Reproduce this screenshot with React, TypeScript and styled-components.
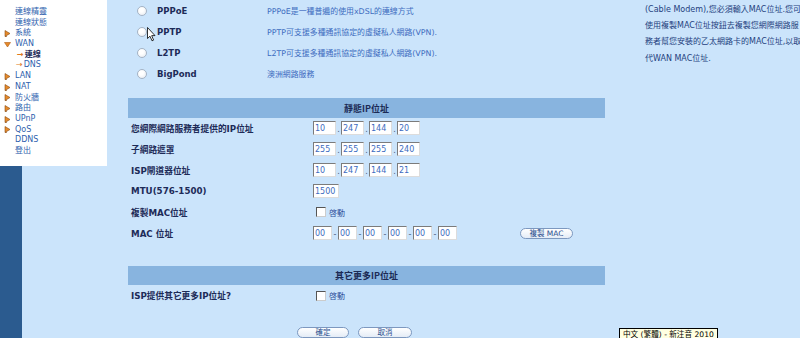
import React from 'react'
import styled, { createGlobalStyle } from 'styled-components'

const GlobalStyle = createGlobalStyle`
  html, body {
    margin: 0;
    padding: 0;
    background: #cbe4fb;
  }
  body {
    font-family: 'DejaVu Sans', 'Noto Sans CJK TC', sans-serif;
  }
`

const Page = styled.div`
  width: 800px;
  height: 338px;
  display: flex;
  overflow: hidden;
  position: relative;
  background: #cbe4fb;
`

const Sidebar = styled.div`
  width: 128px;
  flex-shrink: 0;
  background: linear-gradient(to right, #2b5b8f 0, #2b5b8f 22px, #cbe4fb 22px);
`

const Menu = styled.div`
  width: 107px;
  height: 166px;
  box-sizing: border-box;
  padding-top: 7px;
  background: #ffffff;
`

const MenuItem = styled.div<{ $indent?: number; $active?: boolean }>`
  height: 10.7px;
  line-height: 10.7px;
  display: flex;
  align-items: center;
  padding-left: ${(p) => p.$indent ?? 15}px;
  font-size: 8px;
  color: ${(p) => (p.$active ? '#1b2a55' : '#2f5fae')};
  font-weight: ${(p) => (p.$active ? 'bold' : 'normal')};
  white-space: nowrap;
`

const Bullet = styled.svg`
  width: 7px;
  height: 7px;
  margin-right: 4px;
  flex-shrink: 0;
`

const SubArrow = styled.span`
  color: #e07a20;
  font-size: 8px;
  margin-right: 1px;
`

const Main = styled.div`
  width: 477px;
  flex-shrink: 0;
  display: flex;
  flex-direction: column;
`

const RadioRow = styled.div`
  height: 21.3px;
  display: flex;
  align-items: center;
  padding-left: 9px;
`

const Radio = styled.span`
  width: 8px;
  height: 8px;
  border-radius: 50%;
  border: 1px solid #a5b3c4;
  background: radial-gradient(circle at 40% 35%, #ffffff 30%, #e3e8ee 100%);
  flex-shrink: 0;
`

const RadioLabel = styled.span`
  width: 110px;
  margin-left: 10px;
  font-size: 8.5px;
  font-weight: bold;
  color: #1d2b58;
`

const Desc = styled.span`
  font-size: 7.9px;
  color: #3d6cc0;
  white-space: nowrap;
`

const SectionBar = styled.div<{ $top: number }>`
  margin-top: ${(p) => p.$top}px;
  height: 19.5px;
  background: #88b4df;
  display: flex;
  align-items: center;
  justify-content: center;
  font-size: 9px;
  font-weight: bold;
  color: #1b2a55;
  font-family: 'Noto Sans CJK TC', 'DejaVu Serif', serif;
`

const FormRow = styled.div`
  height: 21.2px;
  display: grid;
  grid-template-columns: 185px 1fr;
  align-items: center;
`

const Label = styled.div`
  padding-left: 3px;
  font-size: 8.7px;
  font-weight: bold;
  color: #1d2b58;
  white-space: nowrap;
`

const Field = styled.div`
  display: flex;
  align-items: center;
`

const TextBox = styled.input<{ $w: number }>`
  width: ${(p) => p.$w}px;
  height: 14px;
  box-sizing: border-box;
  margin: 0;
  padding: 0 1px;
  border: 1px solid;
  border-color: #7b7b7b #dcdcdc #dcdcdc #7b7b7b;
  background: #ffffff;
  font-family: 'DejaVu Sans', sans-serif;
  font-size: 8px;
  color: #3d6cc0;
  outline: none;
`

const Sep = styled.span<{ $w: number }>`
  width: ${(p) => p.$w}px;
  text-align: center;
  font-size: 8px;
  line-height: 14px;
  color: #4a5a7a;
  padding-top: 3px;
`

const Check = styled.span`
  width: 8px;
  height: 8px;
  margin-left: 3px;
  border: 1px solid;
  border-color: #555 #ccc #ccc #555;
  background: #ffffff;
`

const CheckText = styled.span`
  margin-left: 3px;
  font-size: 8px;
  color: #2d4f9a;
`

const PillButton = styled.button<{ $w: number }>`
  width: ${(p) => p.$w}px;
  height: 11px;
  padding: 0;
  border: 1px solid #7d98bf;
  border-radius: 6px;
  background: linear-gradient(#ffffff, #e4ecf6);
  font-family: 'DejaVu Sans', 'Noto Sans CJK TC', sans-serif;
  font-size: 7.5px;
  line-height: 9px;
  color: #2a4f8f;
`

const CopyButton = styled(PillButton)`
  margin-left: 63px;
`

const Actions = styled.div`
  margin-top: 21px;
  padding-left: 169px;
  display: flex;
  gap: 9px;
`

const Note = styled.div`
  margin-left: 40px;
  padding-top: 2px;
  width: 175px;
  flex-shrink: 0;
  display: flex;
  flex-direction: column;
`

const NoteLine = styled.div`
  height: 16.2px;
  line-height: 16.2px;
  font-size: 8px;
  color: #243f7e;
  white-space: nowrap;
`

const ImeTip = styled.div`
  position: absolute;
  left: 619px;
  top: 328px;
  height: 12px;
  padding: 0 3px;
  background: #ffffe1;
  border: 1px solid #000;
  font-size: 7.6px;
  line-height: 11px;
  color: #000;
  white-space: nowrap;
`

const Cursor = styled.svg`
  position: absolute;
  left: 147px;
  top: 27px;
  width: 9px;
  height: 15px;
`

function Tri({ down }: { down?: boolean }) {
  return (
    <Bullet viewBox="0 0 7 7">
      {down ? (
        <path d="M0.5 1.5 L6.5 1.5 L3.5 6 Z" fill="#e58a2a" stroke="#b05a10" strokeWidth="0.6" />
      ) : (
        <path d="M1 0.5 L1 6.5 L6 3.5 Z M1 6.5 L3 6.5" fill="#e58a2a" stroke="#8a4a10" strokeWidth="0.6" />
      )}
    </Bullet>
  )
}

function IpField({ parts }: { parts: string[] }) {
  return (
    <Field>
      {parts.map((v, i) => (
        <React.Fragment key={i}>
          {i > 0 && <Sep $w={5}>.</Sep>}
          <TextBox $w={23} defaultValue={v} readOnly />
        </React.Fragment>
      ))}
    </Field>
  )
}

const modes = [
  ['PPPoE', 'PPPoE是一種普遍的使用xDSL的連線方式'],
  ['PPTP', 'PPTP可支援多種通訊協定的虛擬私人網路(VPN).'],
  ['L2TP', 'L2TP可支援多種通訊協定的虛擬私人網路(VPN).'],
  ['BigPond', '澳洲網路服務'],
]

const noteLines = [
  '(Cable Modem),您必須輸入MAC位址.您可',
  '使用複製MAC位址按鈕去複製您網際網路服',
  '務者幫您安裝的乙太網路卡的MAC位址,以取',
  '代WAN MAC位址.',
]

export default function App() {
  return (
    <Page>
      <GlobalStyle />
      <Sidebar>
        <Menu>
          <MenuItem>連線精靈</MenuItem>
          <MenuItem>連線狀態</MenuItem>
          <MenuItem $indent={4}><Tri />系統</MenuItem>
          <MenuItem $indent={4}><Tri down />WAN</MenuItem>
          <MenuItem $indent={17} $active><SubArrow>→</SubArrow>連線</MenuItem>
          <MenuItem $indent={16}><SubArrow>→</SubArrow>DNS</MenuItem>
          <MenuItem $indent={4}><Tri />LAN</MenuItem>
          <MenuItem $indent={4}><Tri />NAT</MenuItem>
          <MenuItem $indent={4}><Tri />防火牆</MenuItem>
          <MenuItem $indent={4}><Tri />路由</MenuItem>
          <MenuItem $indent={4}><Tri />UPnP</MenuItem>
          <MenuItem $indent={4}><Tri />QoS</MenuItem>
          <MenuItem>DDNS</MenuItem>
          <MenuItem>登出</MenuItem>
        </Menu>
      </Sidebar>

      <Main>
        {modes.map(([name, desc]) => (
          <RadioRow key={name}>
            <Radio />
            <RadioLabel>{name}</RadioLabel>
            <Desc>{desc}</Desc>
          </RadioRow>
        ))}

        <SectionBar $top={14}>靜態IP位址</SectionBar>
        <FormRow>
          <Label>您網際網路服務者提供的IP位址</Label>
          <IpField parts={['10', '247', '144', '20']} />
        </FormRow>
        <FormRow>
          <Label>子網路遮罩</Label>
          <IpField parts={['255', '255', '255', '240']} />
        </FormRow>
        <FormRow>
          <Label>ISP閘道器位址</Label>
          <IpField parts={['10', '247', '144', '21']} />
        </FormRow>
        <FormRow>
          <Label>MTU(576-1500)</Label>
          <Field>
            <TextBox $w={26} defaultValue="1500" readOnly />
          </Field>
        </FormRow>
        <FormRow>
          <Label>複製MAC位址</Label>
          <Field>
            <Check />
            <CheckText>啓動</CheckText>
          </Field>
        </FormRow>
        <FormRow>
          <Label>MAC 位址</Label>
          <Field>
            {['00', '00', '00', '00', '00', '00'].map((v, i) => (
              <React.Fragment key={i}>
                {i > 0 && <Sep $w={6}>-</Sep>}
                <TextBox $w={19} defaultValue={v} readOnly />
              </React.Fragment>
            ))}
            <CopyButton $w={53}>複製 MAC</CopyButton>
          </Field>
        </FormRow>

        <SectionBar $top={22}>其它更多IP位址</SectionBar>
        <FormRow>
          <Label>ISP提供其它更多IP位址?</Label>
          <Field>
            <Check />
            <CheckText>啓動</CheckText>
          </Field>
        </FormRow>

        <Actions>
          <PillButton $w={52}>確定</PillButton>
          <PillButton $w={54}>取消</PillButton>
        </Actions>
      </Main>

      <Note>
        {noteLines.map((line) => (
          <NoteLine key={line}>{line}</NoteLine>
        ))}
      </Note>

      <Cursor viewBox="0 0 9 15">
        <path d="M0.5 0.5 L0.5 11.5 L3 9.2 L5 13.8 L6.6 13.1 L4.7 8.6 L8 8.6 Z" fill="#fff" stroke="#000" strokeWidth="0.8" />
      </Cursor>
      <ImeTip>中文 (繁體) - 新注音 2010</ImeTip>
    </Page>
  )
}
